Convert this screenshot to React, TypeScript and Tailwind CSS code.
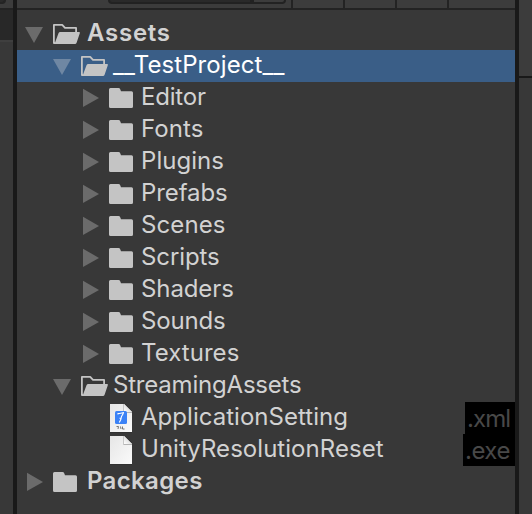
type Kind = 'open' | 'closed' | 'xml' | 'file';
type Item = { name: string; level: 0 | 1 | 2; kind: Kind; arrow?: 'down' | 'right'; selected?: boolean; ext?: string; text: string; extText?: string };

const folders: [string, string][] = [
  ['Editor', 'tracking-[-0.2px]'],
  ['Fonts', 'tracking-[0.1px]'],
  ['Plugins', 'tracking-[0.05px]'],
  ['Prefabs', 'tracking-[-0.1px]'],
  ['Scenes', 'tracking-[0.1px]'],
  ['Scripts', 'tracking-[-0.1px]'],
  ['Shaders', 'tracking-[-0.1px]'],
  ['Sounds', 'tracking-[-0.15px]'],
  ['Textures', 'tracking-[0.05px]'],
];

const items: Item[] = [
  { name: 'Assets', level: 0, kind: 'open', arrow: 'down', text: 'font-semibold tracking-[0.75px] ml-[2px]' },
  { name: '__TestProject__', level: 1, kind: 'open', arrow: 'down', selected: true, text: 'text-white tracking-[0.08px]' },
  ...folders.map(([name, text]): Item => ({ name, level: 2, kind: 'closed', arrow: 'right', text })),
  { name: 'StreamingAssets', level: 1, kind: 'open', arrow: 'down', text: 'tracking-[-0.2px]' },
  { name: 'ApplicationSetting', level: 2, kind: 'xml', ext: '.xml', text: 'tracking-[0.03px]', extText: 'w-[50px] tracking-[-0.9px]' },
  { name: 'UnityResolutionReset', level: 2, kind: 'file', ext: '.exe', text: 'tracking-[0.04px]', extText: 'w-[52px] tracking-[-0.5px]' },
  { name: 'Packages', level: 0, kind: 'closed', arrow: 'right', text: 'font-semibold tracking-[0.35px] ml-[2px]' },
];

const indents = ['pl-[8px]', 'pl-[36px]', 'pl-[64px]'];

function Arrow({ dir, selected }: { dir?: 'down' | 'right'; selected?: boolean }) {
  return (
    <svg className="h-8 w-7 shrink-0" viewBox="0 0 28 32" fill={selected ? '#6f87a3' : '#6b6b6b'}>
      {dir === 'down' && <path d="M0 9H18L9 25Z" />}
      {dir === 'right' && <path d="M2 6.7V25L18 15.9Z" />}
    </svg>
  );
}

function Icon({ kind }: { kind: Kind }) {
  return (
    <svg className="h-8 w-7 shrink-0" viewBox="0 0 28 32">
      {kind === 'closed' && (
        <path fill="#c4c4c4" d="M1.5 6H9.5Q10.8 6 11.2 7.2L12 9.2H22.5Q24 9.2 24 10.7V24.5Q24 26 22.5 26H1.5Q0 26 0 24.5V7.5Q0 6 1.5 6Z" />
      )}
      {kind === 'open' && (
        <>
          <path fill="none" stroke="#c4c4c4" strokeWidth="1.8" strokeLinejoin="round" d="M2 25H0.9V6.9H9.2L12 9.9H23.1V14" />
          <path fill="#c4c4c4" d="M7.2 14H26Q27.3 14 26.8 15.3L23.6 24.8Q23.2 26 22 26H1.5L5.5 15.3Q6 14 7.2 14Z" />
        </>
      )}
      {(kind === 'xml' || kind === 'file') && (
        <>
          <defs>
            <linearGradient id="paper" x1="0" y1="0" x2="1" y2="1">
              <stop offset="0" stopColor="#e6e6e6" />
              <stop offset="1" stopColor="#fafafa" />
            </linearGradient>
            <linearGradient id="fold" x1="0" y1="1" x2="1" y2="0">
              <stop offset="0" stopColor="#ffffff" />
              <stop offset="1" stopColor="#c8c8c8" />
            </linearGradient>
          </defs>
          <path fill="#222" opacity=".5" d="M1 29H23V30.6H1Z" />
          <path fill="url(#paper)" d="M1 2H15L23 10V30H1Z" />
          <path fill="#b5b5b5" d="M14.3 2H15L23 10V11H14.3Z" />
          <path fill="url(#fold)" d="M15 2L23 10H15Z" />
        </>
      )}
      {kind === 'xml' && (
        <>
          <rect x="6" y="9" width="12" height="13" rx="1.5" fill="#3b82f6" />
          <path fill="none" stroke="#fff" strokeWidth="1.1" d="M9 12.4V11.5H10.5L15 10.5M14.5 11L12.5 14.5L11.8 17.5L10.3 20.5M10.5 16.2H12" />
          <path fill="none" stroke="#777" strokeWidth="1" d="M7.5 24.5H9.5L9 27M11.5 24.5L12 27M13.5 24.5V27H15.5" />
        </>
      )}
    </svg>
  );
}

function Row({ item }: { item: Item }) {
  return (
    <div className={`flex h-8 items-center ${indents[item.level]} ${item.selected ? 'bg-[#3a5e87]' : ''}`}>
      <Arrow dir={item.arrow} selected={item.selected} />
      <Icon kind={item.kind} />
      <span className={`h-8 pl-1 leading-[30px] whitespace-pre ${item.text}`}>{item.name}</span>
      {item.ext && (
        <span className={`ml-auto h-8 bg-black pl-[2px] leading-[34px] text-[#484848] ${item.extText}`}>{item.ext}</span>
      )}
    </div>
  );
}

export default function App() {
  return (
    <div className="flex h-[514px] w-[532px] overflow-hidden bg-[#383838] font-['Inter',sans-serif] text-[24px] font-[375] text-[#d2d2d2]">
      <div className="flex w-[13px] flex-col">
        <div className="h-2 overflow-hidden bg-[#3c3c3c]">
          <div className="-ml-2 h-1 w-[14px] rounded-br-[6px] border-r-2 border-b-2 border-[#242424] bg-[#2a2a2a]" />
        </div>
        <div className="h-0.5 bg-[#232323]" />
        <div className="h-[30px] bg-[#282828]" />
        <div className="h-0.5 bg-[#3f3f3f]" />
      </div>
      <div className="w-1 bg-[#191919]" />
      <div className="flex w-[498px] flex-col">
        <div className="flex h-2 bg-[#3c3c3c]">
          <div className="ml-[91px] flex h-1 w-[178px] overflow-hidden rounded-b-[6px] border-x-2 border-b-2 border-[#222] bg-[#2a2a2a]">
            <div className="ml-[140px] w-1 bg-[#222]" />
            <div className="flex-1 bg-[#3c3c3c]" />
          </div>
          <div className="ml-[5px] w-0.5 bg-[#232323]" />
          <div className="ml-[50px] w-0.5 bg-[#232323]" />
          <div className="ml-[50px] w-0.5 bg-[#232323]" />
          <div className="ml-[50px] w-0.5 bg-[#232323]" />
        </div>
        <div className="h-0.5 bg-[#232323]" />
        <div className="pt-2">
          {items.map((item) => (
            <Row key={item.name} item={item} />
          ))}
        </div>
      </div>
      <div className="w-1 bg-[#191919]" />
      <div className="flex flex-1 flex-col">
        <div className="h-[76px] bg-[#3c3c3c]" />
        <div className="h-0.5 bg-[#191919]" />
      </div>
    </div>
  );
}
